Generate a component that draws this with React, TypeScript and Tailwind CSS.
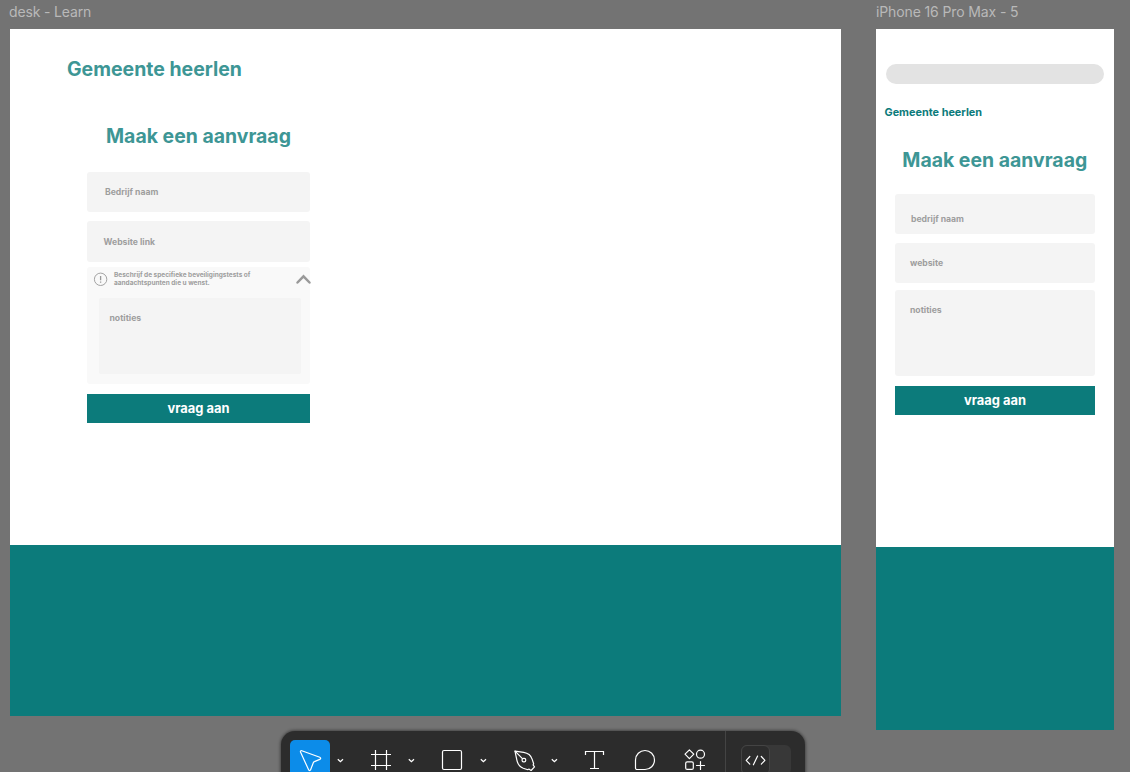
import type { ReactNode } from "react";

function Caret() {
  return (
    <svg className="h-10 w-[21px] shrink-0" viewBox="0 0 21 40" fill="none" stroke="#fff" strokeWidth="1.3">
      <path d="M7.800 19.300l2.600 2.400 2.600-2.400" />
    </svg>
  );
}

function Tool({ children, active }: { children: ReactNode; active?: boolean }) {
  return (
    <div className={active ? "h-10 w-10 shrink-0 rounded-[5px] bg-[#0c8ce9]" : "h-10 w-10 shrink-0"}>
      <svg className="h-10 w-10" viewBox="0 0 40 40" fill="none" stroke="#fff" strokeWidth="1.2" strokeLinejoin="round" strokeLinecap="round">
        {children}
      </svg>
    </div>
  );
}

function Toolbar() {
  return (
    <div className="absolute left-[281px] top-[731px] flex h-[58px] w-[524px] rounded-[14px] bg-[#2c2c2c] pl-[9px] pt-[9px] shadow-[0_0_3px_1px_rgba(0,0,0,0.4)]">
      <Tool active>
        <path d="M11.800 10.700L29.800 17.200c1.200.5 1.200 1.700 0 2.200l-5.400 2.200c-.6.200-.9.600-1.100 1.100l-2.700 7.100c-.4 1-1.600 1-2 0L10.500 12c-.3-.9.400-1.600 1.300-1.300z" />
      </Tool>
      <Caret />
      <div className="w-[10px]" />
      <Tool>
        <path d="M14.500 10v20M25.500 10v20M10 14.500h20M10 25.500h20" strokeLinecap="butt" />
      </Tool>
      <Caret />
      <div className="w-[10px]" />
      <Tool>
        <rect x="10.500" y="10.500" width="19" height="19" rx="1.500" />
      </Tool>
      <div className="w-px" />
      <Caret />
      <div className="w-[10px]" />
      <Tool>
        <path d="M11 11.200l8.700 1.200c4.200.7 7.200 3 8.400 6.700l1.400 4.200c.2.600 0 1.200-.4 1.600l1.400 2-3.400 3.600-2.300-1.400c-.5.500-1.200.6-1.800.4l-3.700-1.300c-3.600-1.400-5.700-4.300-6.500-8.300L11 11.200z" />
        <path d="M11 11.200l7.200 7.200" />
        <rect x="18.100" y="18.300" width="3.600" height="3.600" rx="1.400" />
      </Tool>
      <Caret />
      <div className="w-[10px]" />
      <Tool>
        <path d="M10.500 15v-3.500h18V15M19.500 11.500v17M15 28.500h9" strokeLinecap="butt" strokeLinejoin="miter" />
      </Tool>
      <div className="w-[10px]" />
      <Tool>
        <path d="M20 10.500a9.500 9.500 0 1 1 0 19h-8a1.500 1.500 0 0 1-1.500-1.500v-8A9.500 9.500 0 0 1 20 10.500z" />
      </Tool>
      <div className="w-[10px]" />
      <Tool>
        <path d="M14.400 9.800l4.400 4.400-4.400 4.400L10 14.200z" />
        <circle cx="25.500" cy="14.200" r="4" />
        <rect x="10.700" y="21.800" width="7.600" height="7.600" rx="1.500" />
        <path d="M25.500 21.500v8M21.500 25.500h8" />
      </Tool>
      <div className="-mt-[9px] ml-[10px] w-px bg-[#444444]" />
      <div className="ml-[15px] mt-[5px] h-[30px] w-[50px] rounded-[6px] bg-[#383838]">
        <svg className="h-[30px] w-[29px] rounded-[6px] border border-[#444444] bg-[#2c2c2c]" viewBox="0 0 27 28" fill="none" stroke="#fff" strokeWidth="1.200" strokeLinecap="round" strokeLinejoin="round">
          <path d="M7.800 10.500L4.200 14.300l3.600 3.800M19.300 10.500l3.600 3.800-3.600 3.800M15.600 10l-4.200 8.800" />
        </svg>
      </div>
    </div>
  );
}

export default function App() {
  return (
    <main className="relative flex h-[772px] w-[1130px] overflow-hidden bg-[#737373] pl-[10px] font-['Inter',sans-serif] leading-none [font-optical-sizing:none]">
      <section className="w-[831px] shrink-0">
        <div className="-ml-px flex h-[29px] items-start whitespace-nowrap pt-[5px] text-[14px] tracking-[-0.150px] text-[#b9b9b9]">desk - Learn</div>
        <div className="flex h-[516px] flex-col bg-white">
          <h1 className="mt-[30px] h-5 pl-[57px] text-[19.480px] font-bold leading-[20px] text-[#3d9695]">Gemeente heerlen</h1>
          <form className="ml-[77px] mt-[47px] w-[223px]">
            <h2 className="h-[46px] whitespace-nowrap pl-[19px] text-[19.450px] font-bold leading-[20px] text-[#3d9695]">Maak een aanvraag</h2>
            <div className="h-[40px] rounded-[3px] bg-[#f4f4f4] pl-[18px] pt-[16px] text-[8.650px] font-bold leading-[9px] text-[#9e9e9e]">Bedrijf naam</div>
            <div className="mt-[9px] h-[41px] rounded-[3px] bg-[#f4f4f4] pl-[16.500px] pt-[17px] text-[8.650px] font-bold leading-[9px] text-[#9e9e9e]">Website link</div>
            <div className="mt-[5px] h-[117px] rounded-[3px] bg-[#f9f9f9]">
              <div className="flex h-[31px] items-start">
                <svg className="ml-[6px] mt-[5px] h-[15px] w-[15px] shrink-0" viewBox="0 0 15 15" fill="none" stroke="#999">
                  <circle cx="7.600" cy="7.300" r="6.200" strokeWidth="0.900" />
                  <path d="M7.600 4v4.300M7.600 9.600v1.200" strokeWidth="1.300" />
                </svg>
                <p className="ml-[6px] mt-[4px] w-[160px] shrink-0 whitespace-nowrap text-[6.500px] font-bold leading-[8px] text-[#9e9e9e]">
                  Beschrijf de specifieke beveiligingstests of
                  <br />
                  aandachtspunten die u wenst.
                </p>
                <svg className="ml-[21px] mt-[5px] h-[14px] w-[17px] shrink-0" viewBox="0 0 17 14" fill="none" stroke="#999" strokeWidth="2.500" strokeLinecap="round">
                  <path d="M2.500 10.500l6-6.200 6 6.200" />
                </svg>
              </div>
              <div className="ml-[12px] h-[76px] w-[202px] rounded-[2px] bg-[#f4f4f4] pl-[10.500px] pt-[16px] text-[8.650px] font-bold leading-[9px] text-[#9e9e9e]">notities</div>
            </div>
            <button type="button" className="mt-[10px] flex h-[29px] w-full justify-center bg-[#0c7b7b] pt-[8px] text-[12.900px] font-bold leading-[14px] text-white">vraag aan</button>
          </form>
        </div>
        <div className="h-[170.500px] bg-[#0c7b7b]" />
      </section>

      <section className="ml-[35px] w-[238px] shrink-0">
        <div className="flex h-[29px] items-start whitespace-nowrap pt-[5px] text-[14px] tracking-[-0.120px] text-[#b9b9b9]">iPhone 16 Pro Max - 5</div>
        <div className="flex h-[518px] flex-col bg-white pt-[35px]">
          <div className="mx-[10px] h-5 shrink-0 rounded-full bg-[#e3e3e3]" />
          <h1 className="mt-[23px] h-[12px] pl-[8.500px] text-[10.870px] font-bold leading-[11px] text-[#0c7b7b]">Gemeente heerlen</h1>
          <form className="ml-[19px] mt-[31px] w-[200px]">
            <h2 className="h-[44px] whitespace-nowrap pl-[7.300px] text-[19.450px] font-bold leading-[20px] text-[#3d9695]">Maak een aanvraag</h2>
            <div className="h-[40px] rounded-[3px] bg-[#f4f4f4] pl-[16px] pt-[21px] text-[8.650px] font-bold leading-[9px] text-[#9e9e9e]">bedrijf naam</div>
            <div className="mt-[9px] h-[40px] rounded-[3px] bg-[#f4f4f4] pl-[15px] pt-[16px] text-[8.650px] font-bold leading-[9px] text-[#9e9e9e]">website</div>
            <div className="mt-[7px] h-[86px] rounded-[3px] bg-[#f4f4f4] pl-[15px] pt-[16px] text-[8.650px] font-bold leading-[9px] text-[#9e9e9e]">notities</div>
            <button type="button" className="mt-[10px] flex h-[29px] w-full justify-center bg-[#0c7b7b] pt-[8px] text-[12.900px] font-bold leading-[14px] text-white">vraag aan</button>
          </form>
        </div>
        <div className="h-[183px] bg-[#0c7b7b]" />
      </section>
      <Toolbar />
    </main>
  );
}
